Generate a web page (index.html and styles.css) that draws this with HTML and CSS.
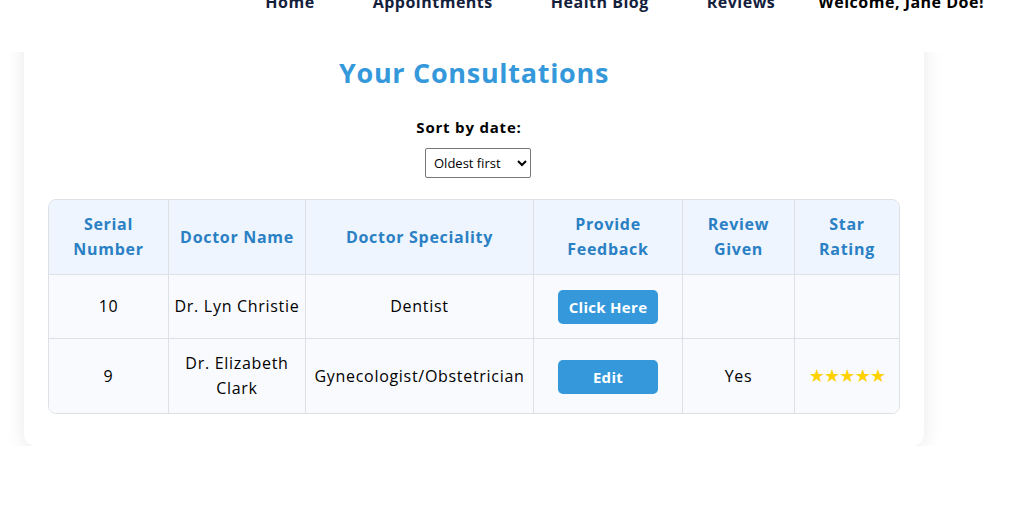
FILE: index.html
```html
<!DOCTYPE html>
<html lang="en">
<head>
<meta charset="utf-8">
<title>Your Consultations</title>
<link rel="stylesheet" href="styles.css">
</head>
<body>
<header class="topbar">
  <nav class="nav">
    <ul class="nav-links">
      <li><a href="#">Home</a></li>
      <li><a href="#">Appointments</a></li>
      <li><a href="#">Health Blog</a></li>
      <li><a href="#">Reviews</a></li>
    </ul>
    <span class="welcome">Welcome, Jane Doe!</span>
  </nav>
</header>
<main class="card">
  <h2 class="title">Your Consultations</h2>
  <div class="sort">
    <label class="sort-label" for="sort">Sort by date:</label>
    <select id="sort" class="sort-select">
      <option>Oldest first</option>
      <option>Newest first</option>
    </select>
  </div>
  <table class="table">
    <colgroup>
      <col class="c1"><col class="c2"><col class="c3"><col class="c4"><col class="c5"><col class="c6">
    </colgroup>
    <thead>
      <tr>
        <th>Serial<br>Number</th>
        <th>Doctor Name</th>
        <th>Doctor Speciality</th>
        <th>Provide<br>Feedback</th>
        <th>Review<br>Given</th>
        <th>Star<br>Rating</th>
      </tr>
    </thead>
    <tbody>
      <tr class="row-short">
        <td>10</td>
        <td>Dr. Lyn Christie</td>
        <td>Dentist</td>
        <td><button class="btn">Click Here</button></td>
        <td></td>
        <td></td>
      </tr>
      <tr>
        <td>9</td>
        <td>Dr. Elizabeth<br>Clark</td>
        <td>Gynecologist/Obstetrician</td>
        <td><button class="btn">Edit</button></td>
        <td>Yes</td>
        <td><span class="stars">★★★★★</span></td>
      </tr>
    </tbody>
  </table>
</main>
</body>
</html>
```

FILE: styles.css
```css
* { box-sizing: border-box; }
html, body { margin: 0; padding: 0; background: #fff; }
body {
  font-family: "Open Sans", "Noto Sans", sans-serif;
  color: #000;
  letter-spacing: 0.5px;
  overflow: hidden;
}
.topbar {
  display: flow-root;
  position: relative;
  z-index: 2;
  height: 52px;
  background: #fff;
}
.nav {
  display: flex;
  justify-content: flex-end;
  align-items: center;
  padding-right: 25px;
  margin-top: -8px;
  font-weight: 700;
  font-size: 16px;
  line-height: 20px;
}
.nav-links {
  display: flex;
  gap: 58px;
  list-style: none;
  margin: 0;
  padding: 0;
}
.nav-links a {
  color: #14213d;
  text-decoration: none;
}
.welcome {
  margin-left: 43px;
  color: #000;
}
.card {
  position: relative;
  z-index: 1;
  width: 900px;
  margin: -30px 0 0 24px;
  padding: 33px 24px 32px 24px;
  background: #fff;
  border-radius: 12px;
  box-shadow: 0 4px 20px rgba(0, 0, 0, 0.09);
}
.title {
  margin: 0;
  text-align: center;
  color: #3498db;
  font-size: 27px;
  line-height: 36px;
  font-weight: 700;
  letter-spacing: 0.7px;
}
.sort {
  display: flex;
  flex-direction: column;
  align-items: center;
  gap: 10px;
  margin-top: 25px;
}
.sort-label {
  font-weight: 700;
  font-size: 15px;
  line-height: 22px;
  letter-spacing: 0.8px;
  margin-left: -10px;
}
.sort-select {
  width: 106px;
  height: 30px;
  margin-left: 8px;
  font-family: inherit;
  font-size: 13px;
  letter-spacing: 0;
  color: #000;
  background: #fff;
  border: 1px solid #767676;
  border-radius: 2px;
  padding: 0 4px;
}
.table {
  margin-top: 21px;
  width: 851px;
  table-layout: fixed;
  border-collapse: separate;
  border-spacing: 0;
  border: 1px solid #dde1e6;
  border-radius: 8px;
  overflow: hidden;
  font-size: 16px;
  line-height: 25px;
  letter-spacing: 0.7px;
}
.c1 { width: 120px; }
.c2 { width: 137px; }
.c3 { width: 228px; }
.c4 { width: 149px; }
.c5 { width: 112px; }
.c6 { width: 104px; }
.table th, .table td {
  text-align: center;
  vertical-align: middle;
  padding: 12px 4px;
  border-right: 1px solid #dde1e6;
  border-bottom: 1px solid #dde1e6;
}
.table th:last-child, .table td:last-child { border-right: none; }
.table tbody tr:last-child td { border-bottom: none; }
.table th {
  background: #eef5fe;
  color: #2a80c4;
  font-weight: 700;
}
.table td {
  background: #f8fafd;
  font-weight: 400;
}
.row-short td { height: 64px; }
.btn {
  display: inline-block;
  width: 100px;
  height: 34px;
  margin-top: 1px;
  border: none;
  border-radius: 5px;
  background: #3498db;
  color: #fff;
  font-family: inherit;
  font-weight: 700;
  font-size: 15px;
  letter-spacing: 0.3px;
  cursor: pointer;
  vertical-align: middle;
}
.stars {
  color: #ffd200;
  font-family: "DejaVu Sans", sans-serif;
  font-size: 18px;
  letter-spacing: -0.8px;
}
```
